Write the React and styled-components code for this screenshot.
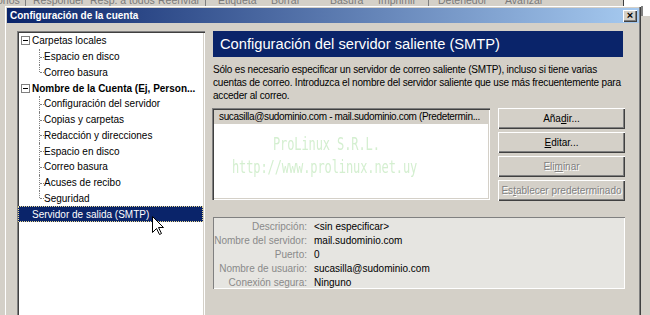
import React from 'react';
import styled, { createGlobalStyle, css } from 'styled-components';

const GlobalStyle = createGlobalStyle`
  html, body {
    margin: 0;
    padding: 0;
    background: #d4d0c8;
    overflow: hidden;
  }
  * { box-sizing: border-box; }
`;

const FONT = `"Liberation Sans", Arial, sans-serif`;

const Screen = styled.div`
  position: relative;
  width: 650px;
  height: 315px;
  overflow: hidden;
  background: #d4d0c8;
  font-family: ${FONT};
  font-size: 10px;
  color: #000;
`;

const AppToolbar = styled.div`
  display: flex;
  align-items: flex-start;
  height: 6px;
  padding-left: 0;
  overflow: hidden;
  white-space: nowrap;
`;

const ToolLabel = styled.span`
  flex: none;
  width: ${(p) => p.$w}px;
  margin-top: -6px;
  margin-left: ${(p) => p.$offset || 0}px;
  font-size: 10.5px;
  line-height: 13px;
  color: #7a7a7a;
`;

const ToolSep = styled.span`
  flex: none;
  width: ${(p) => p.$w}px;
  height: 6px;
  border-left: 1px solid #808080;
`;

const SearchBox = styled.div`
  margin-left: auto;
  width: 27px;
  height: 6px;
  background: #fff;
  border-left: 1px solid #404040;
`;

const Desktop = styled.div`
  display: flex;
`;

const Gutter = styled.div`
  width: 9px;
  height: 10px;
  background: #fff;
  border-left: 2px solid #808080;
`;

const Window = styled.div`
  margin-left: 5px;
  width: 636px;
  height: 320px;
  padding: 2px;
  background: #d4d0c8;
  box-shadow: inset 1px 1px #fff, inset -1px -1px #404040, inset -2px -2px #808080;
`;

const TitleBar = styled.div`
  display: flex;
  align-items: center;
  height: 15px;
  padding: 0 2px 0 3px;
  background: linear-gradient(to right, #0a246a, #a6caf0);
`;

const Title = styled.span`
  flex: 1;
  color: #fff;
  font-weight: bold;
  font-size: 10px;
`;

const CloseButton = styled.div`
  display: flex;
  align-items: center;
  justify-content: center;
  width: 14px;
  height: 12px;
  background: #d4d0c8;
  font-size: 11px;
  font-weight: bold;
  line-height: 1;
  box-shadow: inset 1px 1px #fff, inset -1px -1px #404040, inset -2px -2px #808080;
`;

const Body = styled.div`
  display: flex;
  gap: 8px;
  padding: 8px 14px 0 10px;
`;

const Tree = styled.div`
  width: 188px;
  height: 300px;
  padding: 2px 2px 0 1px;
  background: #fff;
  box-shadow: inset 1px 1px #808080, inset 2px 2px #404040, inset -1px -1px #fff, inset -2px -2px #d4d0c8;
`;

const Row = styled.div`
  position: relative;
  display: flex;
  align-items: center;
  height: 15.75px;
  padding-left: ${(p) => (p.$child ? 26 : 3)}px;
  white-space: nowrap;
  font-weight: ${(p) => (p.$bold ? 'bold' : 'normal')};

  ${(p) =>
    p.$child &&
    css`
      &::before {
        content: '';
        position: absolute;
        left: 21px;
        top: 0;
        height: ${p.$last ? '50%' : '100%'};
        border-left: 1px dotted #808080;
      }
      &::after {
        content: '';
        position: absolute;
        left: 22px;
        top: 50%;
        width: 4px;
        border-top: 1px dotted #808080;
      }
    `}

  ${(p) =>
    p.$selected &&
    css`
      background: #0a246a;
      color: #fff;
      outline: 1px dotted #e8d890;
      outline-offset: -1px;
    `}
`;

const Expander = styled.span`
  position: relative;
  width: 9px;
  height: 9px;
  margin-right: 2px;
  border: 1px solid #808080;
  background: #fff;

  &::after {
    content: '';
    position: absolute;
    left: 1px;
    top: 3px;
    width: 5px;
    height: 1px;
    background: #000;
  }
`;

const NoExpander = styled.span`
  width: 9px;
  margin-right: 2px;
`;

const Panel = styled.div`
  display: flex;
  flex-direction: column;
  width: 412px;
`;

const Header = styled.div`
  display: flex;
  align-items: center;
  height: 26px;
  padding-left: 7px;
  margin-right: 2px;
  background: #0a246a;
  color: #fff;
  font-size: 14.7px;
`;

const Description = styled.p`
  margin: 6px 0 0;
  line-height: 13px;
  white-space: nowrap;
  letter-spacing: -0.2px;
`;

const ListRow = styled.div`
  display: flex;
  gap: 8px;
  margin-top: 6px;
`;

const ListBox = styled.div`
  position: relative;
  width: 278px;
  height: 92px;
  margin-left: -1px;
  padding: 2px;
  background: #fff;
  box-shadow: inset 1px 1px #808080, inset 2px 2px #404040, inset -1px -1px #fff, inset -2px -2px #d4d0c8;
`;

const ListItem = styled.div`
  height: 14px;
  line-height: 14px;
  padding-left: 5px;
  background: #d4d0c8;
  white-space: nowrap;
  overflow: hidden;
  letter-spacing: -0.35px;
`;

const Watermark = styled.div`
  position: absolute;
  left: ${(p) => p.$left}px;
  top: ${(p) => p.$top}px;
  color: #d4efd0;
  font-family: "DejaVu Sans Mono", "Liberation Mono", monospace;
  font-size: 12px;
  letter-spacing: -0.1px;
  white-space: nowrap;
  transform: scaleY(1.4);
  transform-origin: left top;
  pointer-events: none;
`;

const ButtonColumn = styled.div`
  display: flex;
  flex-direction: column;
  gap: 3px;
`;

const Button = styled.div`
  display: flex;
  align-items: center;
  justify-content: center;
  width: 127px;
  height: 21px;
  background: #d4d0c8;
  box-shadow: inset 1px 1px #fff, inset -1px -1px #404040, inset -2px -2px #808080;
  color: ${(p) => (p.$disabled ? '#808080' : '#000')};
  text-shadow: ${(p) => (p.$disabled ? '1px 1px #fff' : 'none')};
`;

const Details = styled.div`
  display: grid;
  grid-template-columns: 94px 1fr;
  column-gap: 7px;
  grid-auto-rows: 14px;
  align-items: center;
  height: 72px;
  margin-top: 16px;
  padding-top: 2px;
  background: #e6e5e1;
  box-shadow: inset 1px 1px #808080, inset -1px -1px #fff;
`;

const Label = styled.span`
  text-align: right;
  color: #8a8a8a;
  white-space: nowrap;
`;

const Value = styled.span`
  white-space: nowrap;
`;

const Cursor = styled.svg`
  position: absolute;
  left: 152px;
  top: 216px;
`;

const toolbarItems = [
  { text: 'onos', w: 28, offset: -3 },
  { sep: true, w: 8 },
  { text: 'Responder', w: 57 },
  { text: 'Resp. a todos', w: 68 },
  { text: 'Reenviar', w: 47 },
  { sep: true, w: 13 },
  { text: 'Etiqueta', w: 53 },
  { text: 'Borrar', w: 59 },
  { text: 'Basura', w: 48 },
  { text: 'Imprimir', w: 50 },
  { sep: true, w: 10 },
  { text: 'Detenedor', w: 67 },
  { text: 'Avanzar', w: 60 },
];

const treeRows = [
  { text: 'Carpetas locales', expander: true },
  { text: 'Espacio en disco', child: true },
  { text: 'Correo basura', child: true, last: true },
  { text: 'Nombre de la Cuenta (Ej, Person...', expander: true, bold: true },
  { text: 'Configuración del servidor', child: true },
  { text: 'Copias y carpetas', child: true },
  { text: 'Redacción y direcciones', child: true },
  { text: 'Espacio en disco', child: true },
  { text: 'Correo basura', child: true },
  { text: 'Acuses de recibo', child: true },
  { text: 'Seguridad', child: true, last: true },
  { text: 'Servidor de salida (SMTP)', selected: true },
];

const details = [
  ['Descripción:', '<sin especificar>'],
  ['Nombre del servidor:', 'mail.sudominio.com'],
  ['Puerto:', '0'],
  ['Nombre de usuario:', 'sucasilla@sudominio.com'],
  ['Conexión segura:', 'Ninguno'],
];

const App = () => {
  return (
    <Screen>
      <GlobalStyle />
      <AppToolbar>
        {toolbarItems.map((t, i) =>
          t.sep ? (
            <ToolSep key={i} $w={t.w} />
          ) : (
            <ToolLabel key={i} $w={t.w} $offset={t.offset}>
              {t.text}
            </ToolLabel>
          )
        )}
        <SearchBox />
      </AppToolbar>
      <Desktop>
        <Window>
          <TitleBar>
            <Title>Configuración de la cuenta</Title>
            <CloseButton>×</CloseButton>
          </TitleBar>
          <Body>
            <Tree>
              {treeRows.map((r, i) => (
                <Row key={i} $child={r.child} $last={r.last} $bold={r.bold} $selected={r.selected}>
                  {!r.child && (r.expander ? <Expander /> : <NoExpander />)}
                  {r.text}
                </Row>
              ))}
            </Tree>
            <Panel>
              <Header>Configuración del servidor saliente (SMTP)</Header>
              <Description>
                Sólo es necesario especificar un servidor de correo saliente (SMTP), incluso si tiene varias
                <br />
                cuentas de correo. Introduzca el nombre del servidor saliente que use más frecuentemente para
                <br />
                acceder al correo.
              </Description>
              <ListRow>
                <ListBox>
                  <ListItem>sucasilla@sudominio.com - mail.sudominio.com (Predetermin...</ListItem>
                  <Watermark $left={61} $top={27}>ProLinux S.R.L.</Watermark>
                  <Watermark $left={20} $top={50}>http://www.prolinux.net.uy</Watermark>
                </ListBox>
                <ButtonColumn>
                  <Button>Aña<u>d</u>ir...</Button>
                  <Button><u>E</u>ditar...</Button>
                  <Button $disabled>Eli<u>m</u>inar</Button>
                  <Button $disabled>Es<u>t</u>ablecer predeterminado</Button>
                </ButtonColumn>
              </ListRow>
              <Details>
                {details.map(([label, value]) => (
                  <React.Fragment key={label}>
                    <Label>{label}</Label>
                    <Value>{value}</Value>
                  </React.Fragment>
                ))}
              </Details>
            </Panel>
          </Body>
        </Window>
        <Gutter />
      </Desktop>
      <Cursor width="13" height="20" viewBox="0 0 13 20">
        <path d="M0.5 0.5 L0.5 16.5 L4.5 12.5 L7.5 18.5 L9.5 17.5 L6.5 11.5 L11.5 11.5 Z" fill="#fff" stroke="#000" strokeWidth="1" />
      </Cursor>
    </Screen>
  );
};

export default App;
